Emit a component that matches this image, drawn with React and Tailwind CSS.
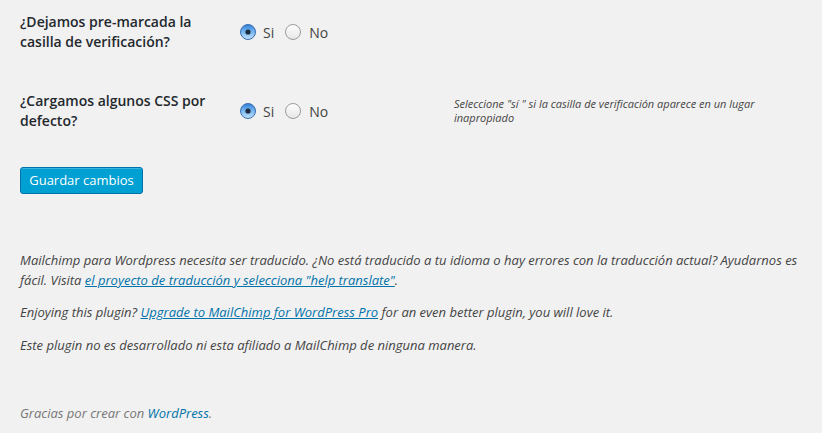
import React from "react";

function Radio({ checked }) {
  if (checked) {
    return (
      <svg width="16" height="16" viewBox="0 0 16 16" className="shrink-0">
        <defs>
          <linearGradient id="rc" x1="0" y1="0" x2="0" y2="1">
            <stop offset="0" stopColor="#2f7fd8" />
            <stop offset="0.5" stopColor="#7ab8f0" />
            <stop offset="1" stopColor="#c4e2fb" />
          </linearGradient>
        </defs>
        <circle cx="8" cy="8" r="7.5" fill="url(#rc)" stroke="#3b6fb0" strokeWidth="1" />
        <circle cx="8" cy="8" r="2.6" fill="#1c2a3d" />
      </svg>
    );
  }
  return (
    <svg width="16" height="16" viewBox="0 0 16 16" className="shrink-0">
      <defs>
        <linearGradient id="ru" x1="0" y1="0" x2="0" y2="1">
          <stop offset="0" stopColor="#ffffff" />
          <stop offset="1" stopColor="#e6e6e6" />
        </linearGradient>
      </defs>
      <circle cx="8" cy="8" r="7.5" fill="url(#ru)" stroke="#9b9b9b" strokeWidth="1" />
    </svg>
  );
}

function Radios() {
  return (
    <div className="flex items-center text-[14px] text-[#444]">
      <Radio checked />
      <span className="ml-[7px]">Si</span>
      <span className="ml-[11px] flex"><Radio /></span>
      <span className="ml-[8px]">No</span>
    </div>
  );
}

export default function App() {
  return (
    <div
      className="min-h-[433px] w-full bg-[#f1f1f1] px-[20px] pt-[12px]"
      style={{ fontFamily: '"Open Sans", sans-serif' }}
    >
      <div className="flex h-[40px] items-center">
        <div className="w-[220px] shrink-0 pr-[20px] text-[14px] font-semibold leading-[20px] text-[#23282d]">
          ¿Dejamos pre-marcada la casilla de verificación?
        </div>
        <Radios />
      </div>

      <div className="mt-[39px] flex h-[40px] items-center">
        <div className="w-[220px] shrink-0 pr-[20px] text-[14px] font-semibold leading-[20px] text-[#23282d]">
          ¿Cargamos algunos CSS por defecto?
        </div>
        <div className="w-[214px] shrink-0">
          <Radios />
        </div>
        <div className="w-[330px] text-[11px] italic leading-[14px] text-[#444]">
          Seleccione "sí " si la casilla de verificación aparece en un lugar inapropiado
        </div>
      </div>

      <div className="mt-[36px]">
        <button className="h-[27px] w-[123px] rounded-[3px] border border-[#0073aa] bg-[#00a0d2] text-[13px] text-white shadow-[inset_0_1px_0_rgba(120,200,230,0.5)]">
          Guardar cambios
        </button>
      </div>

      <div className="mt-[57px] text-[13px] italic leading-[19.5px] text-[#444]">
        <p>
          Mailchimp para Wordpress necesita ser traducido. ¿No está traducido a tu idioma o hay errores con la traducción actual? Ayudarnos es fácil. Visita{" "}
          <a className="text-[#0073aa] underline" href="#">el proyecto de traducción y selecciona "help translate"</a>.
        </p>
        <p className="mt-[13px]">
          Enjoying this plugin?{" "}
          <a className="text-[#0073aa] underline" href="#">Upgrade to MailChimp for WordPress Pro</a>{" "}
          for an even better plugin, you will love it.
        </p>
        <p className="mt-[13px]">
          Este plugin no es desarrollado ni esta afiliado a MailChimp de ninguna manera.
        </p>
      </div>

      <div className="mt-[48px] text-[13px] italic leading-[20px] text-[#777]">
        Gracias por crear con <a className="text-[#0073aa]" href="#">WordPress</a>.
      </div>
    </div>
  );
}
